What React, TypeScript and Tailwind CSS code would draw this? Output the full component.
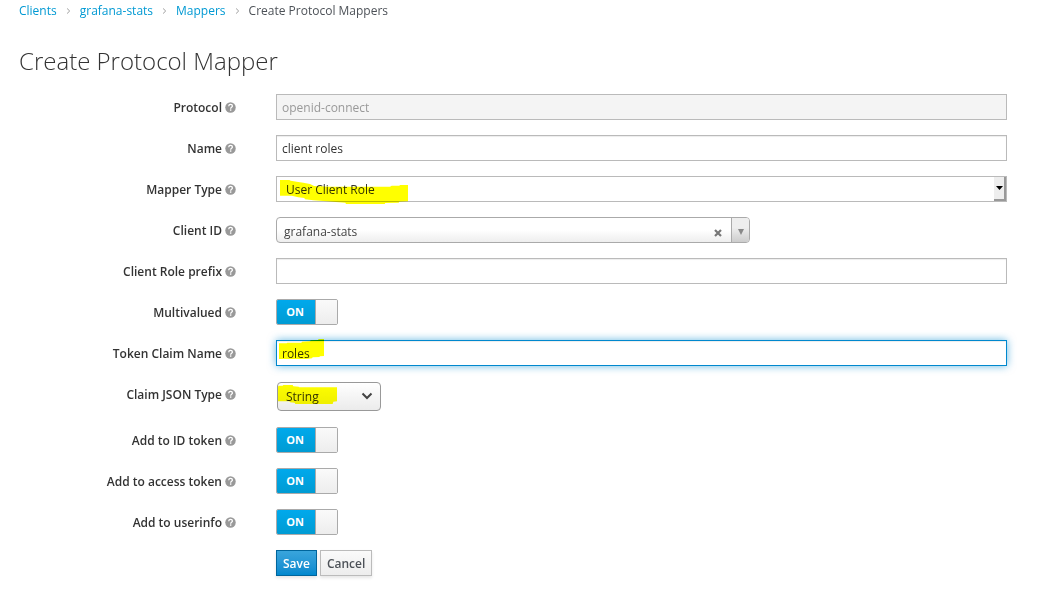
import { useState, type ReactNode } from 'react';

const inputClass =
  'block h-[26px] w-full border border-[#bababa] bg-white px-[5px] text-xs text-[#333] shadow-[inset_0_1px_1px_rgba(0,0,0,0.075)] outline-none';

function HelpIcon() {
  return (
    <svg viewBox="0 0 22 22" className="size-[11px] shrink-0" aria-hidden="true">
      <circle cx="11" cy="11" r="10.5" fill="#999" />
      <path
        d="M7.4 8.4C7.6 6 9 4.9 11.1 4.9c2.200 0 3.700 1.200 3.700 3.100 0 2.700-3.500 2.700-3.500 5.300"
        fill="none"
        stroke="#fff"
        strokeWidth="2.600"
      />
      <rect x="9.900" y="14.700" width="2.800" height="2.800" fill="#fff" />
    </svg>
  );
}

function Row({ label, id, children }: { label: string; id: string; children: ReactNode }) {
  return (
    <div className="flex items-start gap-10">
      <div className="flex h-[26px] w-[217px] shrink-0 items-center justify-end gap-[3px]">
        <label htmlFor={id} className="pt-[2px] font-semibold">
          {label}
        </label>
        <HelpIcon />
      </div>
      <div className="relative min-w-0 flex-1">{children}</div>
    </div>
  );
}

function Marker({ points, viewBox, className }: { points: string; viewBox: string; className: string }) {
  return (
    <svg
      viewBox={viewBox}
      className={`pointer-events-none absolute mix-blend-multiply ${className}`}
      aria-hidden="true"
    >
      <polygon points={points} fill="#ffff00" />
    </svg>
  );
}

function Toggle({ id }: { id: string }) {
  const [on, setOn] = useState(true);
  return (
    <label className="relative flex h-[26px] w-[62px] cursor-pointer overflow-hidden rounded-[2px] border border-[#aaa]">
      <input
        id={id}
        type="checkbox"
        checked={on}
        onChange={(e) => setOn(e.target.checked)}
        className="sr-only"
      />
      {on ? (
        <>
          <span className="flex w-[39px] items-center justify-center border-r border-[#aaa] bg-linear-to-b from-[#00a9ec] to-[#009bd3] pr-[2px] text-[11px] font-bold text-white">
            ON
          </span>
          <span className="flex-1 bg-linear-to-b from-[#fafafa] to-[#ededed]" />
        </>
      ) : (
        <>
          <span className="flex-1 bg-linear-to-b from-[#fafafa] to-[#ededed]" />
          <span className="flex w-[39px] items-center justify-center border-l border-[#aaa] bg-white text-[11px] font-bold text-[#333]">
            OFF
          </span>
        </>
      )}
    </label>
  );
}

function Crumb({ children }: { children: ReactNode }) {
  return (
    <li className="flex items-center">
      <a href="#" className="text-[#0099d3]">
        {children}
      </a>
      <svg viewBox="0 0 4 6" className="mx-[9px] mt-px h-[6px] w-[5px]" aria-hidden="true">
        <path d="M0.600 0.500L3.200 3L0.600 5.500" fill="none" stroke="#9c9c9c" strokeWidth="1" />
      </svg>
    </li>
  );
}

export default function App() {
  const [client, setClient] = useState('grafana-stats');
  return (
    <main className="min-h-screen bg-white pr-8 pl-[19px] font-['Open_Sans',sans-serif] text-xs leading-5 text-[#333]">
      <nav aria-label="Breadcrumb">
        <ol className="flex h-[21px] items-center">
          <Crumb>Clients</Crumb>
          <Crumb>grafana-stats</Crumb>
          <Crumb>Mappers</Crumb>
          <li className="text-[#4d5258]">Create Protocol Mappers</li>
        </ol>
      </nav>
      <h1 className="mt-6 mb-[17px] text-2xl leading-8 font-light">Create Protocol Mapper</h1>

      <form className="flex flex-col gap-[15px] pb-6" onSubmit={(e) => e.preventDefault()}>
        <Row label="Protocol" id="protocol">
          <input
            id="protocol"
            defaultValue="openid-connect"
            disabled
            className="block h-[26px] w-full border border-[#bababa] bg-[#f4f4f4] px-[5px] text-xs text-[#999]"
          />
        </Row>
        <Row label="Name" id="name">
          <input id="name" defaultValue="client roles" className={inputClass} />
        </Row>
        <Row label="Mapper Type" id="mapper-type">
          <select
            id="mapper-type"
            className="block h-[26px] w-full appearance-none border border-[#bababa] bg-white px-[9px] pt-[2px] text-xs text-[#333]"
          >
            <option>User Client Role</option>
          </select>
          <span className="pointer-events-none absolute inset-y-px right-px flex w-3 items-center justify-center border-r-2 border-b-2 border-[#999] bg-[#eee]">
            <svg viewBox="0 0 7 4" className="h-1 w-[7px]" aria-hidden="true">
              <path d="M0 0h7L3.500 4z" fill="#000" />
            </svg>
          </span>
          <Marker
            className="top-0 left-0 h-7 w-[132px]"
            viewBox="48 18 396 84"
            points="60,30 88,30 92,32 110,35 130,38 150,42 162,48 210,50 390,50 395,47 418,47 420,45 444,45 444,94 418,95 416,98 376,99 374,102 258,102 256,98 200,94 160,91 135,88 133,84 115,82 95,77 60,77"
          />
        </Row>
        <Row label="Client ID" id="client-id">
          <div className="relative flex h-[26px] w-full max-w-[474px] overflow-hidden rounded-[4px] border border-[#aaa] bg-linear-to-t from-[#eee] to-white to-50%">
            <select
              id="client-id"
              value={client}
              onChange={(e) => setClient(e.target.value)}
              className="min-w-0 flex-1 appearance-none bg-transparent pt-1 pl-[7px] text-xs text-[#444]"
            >
              <option value=""></option>
              <option value="grafana-stats">grafana-stats</option>
            </select>
            <button
              type="button"
              aria-label="Clear client"
              onClick={() => setClient('')}
              className="flex w-[26px] items-center justify-center pt-[5px]"
            >
              <svg viewBox="0 0 8 8" className="size-2" aria-hidden="true">
                <path d="M1 1l6 6M7 1L1 7" stroke="#777" strokeWidth="2.200" />
              </svg>
            </button>
            <span className="pointer-events-none flex w-[18px] items-center justify-center border-l border-[#aaa] bg-linear-to-t from-[#ccc] to-[#eee] to-60% pt-[3px]">
              <svg viewBox="0 0 6 6" className="size-[6px]" aria-hidden="true">
                <path d="M0 0h6L3 6z" fill="#888" />
              </svg>
            </span>
          </div>
        </Row>
        <Row label="Client Role prefix" id="role-prefix">
          <input id="role-prefix" className={inputClass} />
        </Row>
        <Row label="Multivalued" id="multivalued">
          <Toggle id="multivalued" />
        </Row>
        <Row label="Token Claim Name" id="claim-name">
          <input
            id="claim-name"
            defaultValue="roles"
            className="block h-[26px] w-full border border-[#0088ce] bg-white px-[5px] text-xs text-[#333] shadow-[inset_0_1px_1px_rgba(0,0,0,0.075),0_0_8px_rgba(0,136,206,0.6)] outline-none"
          />
          <Marker
            className="-top-px left-0 h-[21px] w-12"
            viewBox="48 147 144 63"
            points="57,160 80,160 82,158 124,158 126,155 150,154 152,151 174,150 176,147 192,147 192,198 180,199 178,201 158,202 156,205 140,207 57,207"
          />
        </Row>
        <Row label="Claim JSON Type" id="json-type">
          <div className="pt-px pb-px pl-px">
            <div className="relative w-[104px]">
              <select
                id="json-type"
                className="block h-[29px] w-full appearance-none rounded-[4px] border border-[#999] bg-linear-to-b from-white to-[#ebebeb] px-2 text-xs text-[#333]"
              >
                <option>String</option>
              </select>
              <svg
                viewBox="0 0 12 8"
                className="pointer-events-none absolute top-[10px] right-2 h-2 w-3"
                aria-hidden="true"
              >
                <path d="M1.500 1.500L6 6l4.500-4.500" fill="none" stroke="#444" strokeWidth="2" />
              </svg>
            </div>
          </div>
          <Marker
            className="top-[3px] left-0 h-[21px] w-[62px]"
            viewBox="48 42 186 63"
            points="54,50 56,47 68,47 70,45 98,45 100,49 116,50 118,52 231,52 231,94 220,95 218,102 106,102 104,98 90,97 88,94 54,94"
          />
        </Row>
        <Row label="Add to ID token" id="id-token">
          <Toggle id="id-token" />
        </Row>
        <Row label="Add to access token" id="access-token">
          <Toggle id="access-token" />
        </Row>
        <Row label="Add to userinfo" id="userinfo">
          <Toggle id="userinfo" />
        </Row>
        <div className="flex gap-[3px] pl-[257px]">
          <button
            type="submit"
            className="h-[26px] border border-[#00659c] bg-linear-to-b from-[#39a5dc] to-[#0088ce] px-[6px] pt-[2px] font-semibold text-white shadow-[0_2px_3px_rgba(3,3,3,0.1)]"
          >
            Save
          </button>
          <button
            type="button"
            className="h-[26px] border border-[#bbb] bg-linear-to-b from-[#fafafa] to-[#ededed] px-[6px] pt-[2px] font-semibold text-[#4d5258] shadow-[0_2px_3px_rgba(3,3,3,0.1)]"
          >
            Cancel
          </button>
        </div>
      </form>
    </main>
  );
}
